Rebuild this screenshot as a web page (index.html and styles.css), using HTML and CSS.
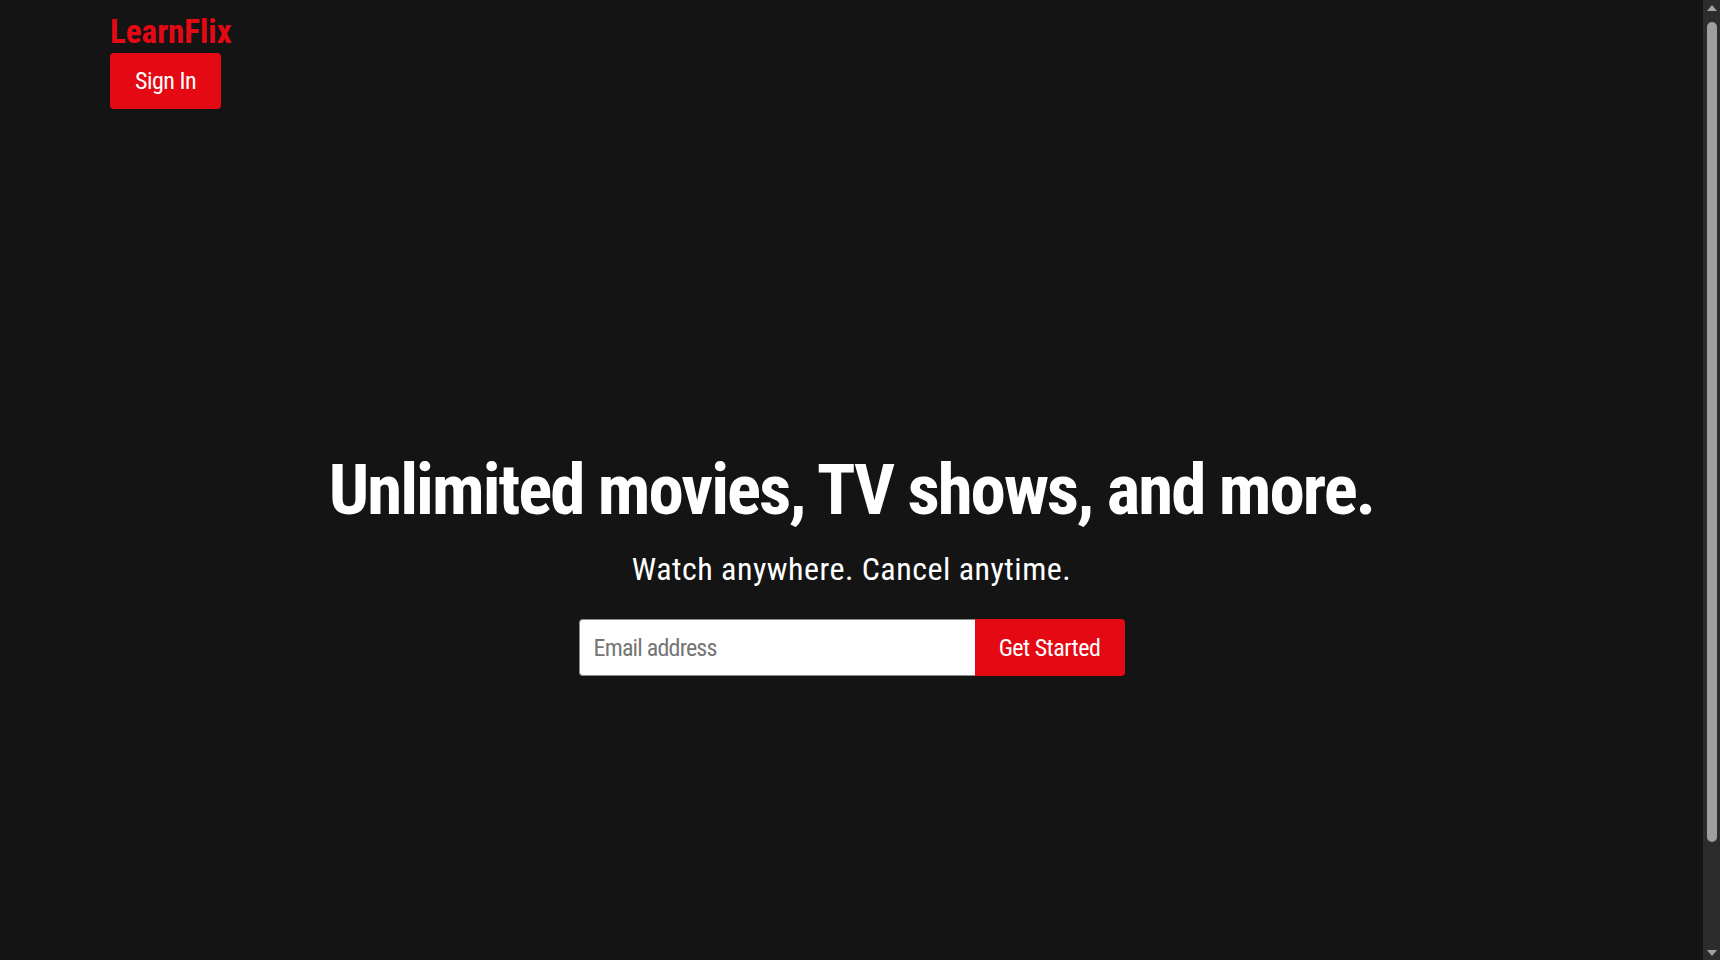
FILE: index.html
```html
<!DOCTYPE html>
<html lang="en">
<head>
<meta charset="utf-8">
<title>LearnFlix</title>
<link rel="stylesheet" href="styles.css">
</head>
<body>
<div class="viewport">
  <div class="page">
    <header class="site-header">
      <div class="logo">LearnFlix</div>
      <button class="btn sign-in" type="button">Sign In</button>
    </header>
    <main class="hero">
      <h1 class="hero-title">Unlimited movies, TV shows, and more.</h1>
      <p class="hero-sub">Watch anywhere. Cancel anytime.</p>
      <form class="signup">
        <input class="email" type="email" placeholder="Email address">
        <button class="btn get-started" type="button">Get Started</button>
      </form>
    </main>
  </div>
  <div class="scrollbar" aria-hidden="true">
    <div class="sb-arrow"><span class="tri tri-up"></span></div>
    <div class="sb-track"><div class="sb-thumb"></div></div>
    <div class="sb-arrow"><span class="tri tri-down"></span></div>
  </div>
</div>
</body>
</html>
```
FILE: styles.css
```css
:root {
  color-scheme: dark;
}

* {
  box-sizing: border-box;
}

body {
  margin: 0;
  background: #141414;
  color: #ffffff;
  font-family: Roboto, "Noto Sans", Arial, sans-serif;
}

.viewport {
  display: flex;
  height: 100vh;
  overflow: hidden;
}

.page {
  flex: 1;
  min-width: 0;
  overflow-y: auto;
  scrollbar-width: none;
}

/* decorative scrollbar, as seen in the reference */
.scrollbar {
  width: 17px;
  flex: none;
  display: flex;
  flex-direction: column;
  background: #2c2c2c;
}

.sb-arrow {
  height: 17px;
  flex: none;
  display: flex;
  align-items: center;
  justify-content: center;
  padding-left: 1px;
}

.tri {
  width: 0;
  height: 0;
  border-left: 5px solid transparent;
  border-right: 5px solid transparent;
}

.tri-up {
  border-bottom: 6px solid #a3a3a3;
  margin-top: -2px;
}

.tri-down {
  border-top: 6px solid #a3a3a3;
  margin-top: 2px;
}

.sb-track {
  flex: 1;
  display: flex;
  justify-content: center;
  padding: 5px 0 0 1px;
}

.sb-thumb {
  width: 10px;
  height: 820px;
  border-radius: 5px;
  background: #9f9f9f;
}

.site-header {
  display: flex;
  flex-direction: column;
  align-items: flex-start;
  padding: 15px 110px 15px;
}

.logo {
  color: #e50914;
  font-size: 33px;
  line-height: 33px;
  font-weight: 700;
  font-stretch: 85%;
}

.btn {
  font-family: inherit;
  border: none;
  background: #e50914;
  color: #ffffff;
  cursor: pointer;
}

.sign-in {
  margin-top: 5px;
  width: 111px;
  padding: 14px 0;
  font-size: 24px;
  font-stretch: 85%;
  letter-spacing: -0.5px;
  line-height: 28px;
  border-radius: 4px;
}

.hero {
  height: 100vh;
  display: flex;
  flex-direction: column;
  align-items: center;
  justify-content: center;
  padding-bottom: 84px;
  text-align: center;
}

.hero-title {
  margin: 0;
  font-size: 71px;
  font-weight: 700;
  font-stretch: 85%;
  letter-spacing: -2px;
  line-height: 84px;
}

.hero-sub {
  margin: 18px 0 0;
  font-size: 32px;
  font-weight: 400;
  font-stretch: 85%;
  letter-spacing: 0.5px;
  line-height: normal;
}

.signup {
  display: flex;
  margin-top: 31px;
  height: 57px;
}

.email {
  width: 396px;
  height: 57px;
  padding: 0 14px;
  font-family: inherit;
  font-stretch: 85%;
  font-size: 24px;
  letter-spacing: -0.8px;
  color: #222;
  background: #ffffff;
  border: 1px solid #8c8c8c;
  border-right: none;
  border-radius: 4px 0 0 4px;
  outline: none;
}

.email::placeholder {
  color: #757575;
}

.get-started {
  width: 150px;
  height: 57px;
  font-size: 24px;
  font-stretch: 85%;
  letter-spacing: -0.5px;
  border-radius: 0 4px 4px 0;
}
```
